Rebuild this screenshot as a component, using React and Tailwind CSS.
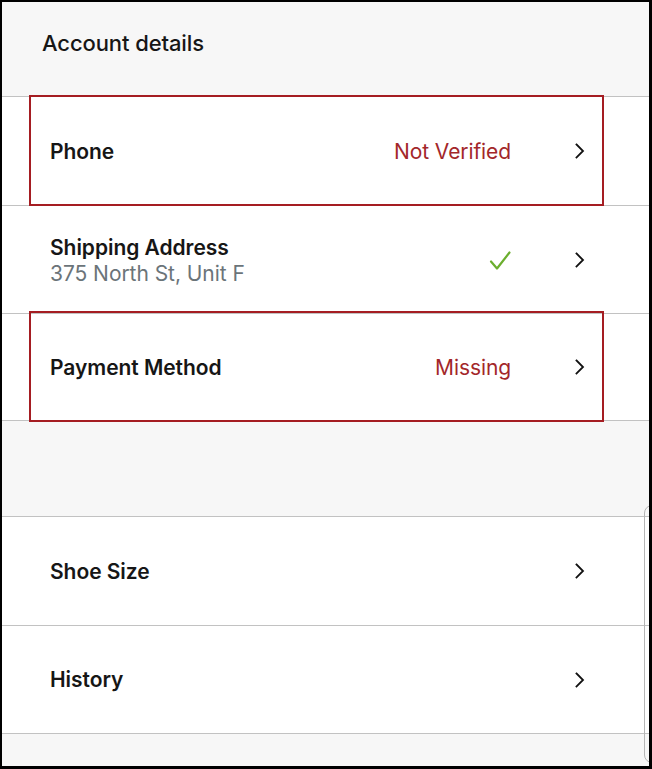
import React from "react";

function Chevron() {
  return (
    <svg width="12" height="16" viewBox="0 0 12 16" fill="none" className="shrink-0">
      <path d="M2.5 1.5 L9 8 L2.5 14.5" stroke="#111" strokeWidth="1.8" strokeLinecap="square" strokeLinejoin="miter" />
    </svg>
  );
}

function Check() {
  return (
    <svg width="24" height="20" viewBox="0 0 24 20" fill="none">
      <path d="M3 10.5 L9 17.5 L21.5 1.5" stroke="#6bae2e" strokeWidth="2.2" strokeLinecap="round" strokeLinejoin="round" />
    </svg>
  );
}

function Divider() {
  return <div className="h-px bg-[#c2c2c2] shrink-0" />;
}

function Row({ title, sub, status, check, h }) {
  return (
    <div className={`${h} bg-white flex items-center pl-[48px] pr-[63px] shrink-0`}>
      <div className={`flex-1 flex flex-col ${sub ? "mt-[3px]" : ""}`}>
        <span className="text-[21px] leading-[25px] font-semibold text-[#161616] tracking-[-0.05px]">{title}</span>
        {sub && <span className="text-[21px] leading-[28px] text-[#6b7479] tracking-[-0.05px]">{sub}</span>}
      </div>
      {status && <span className="text-[21px] leading-[25px] text-[#a3272a] mr-[63px] tracking-[-0.1px]">{status}</span>}
      {check && <div className="mr-[62px] mt-[2px]"><Check /></div>}
      <Chevron />
    </div>
  );
}

export default function App() {
  return (
    <div
      className="relative w-[652px] h-[769px] overflow-hidden bg-[#f7f7f7] border-black border-l-2 border-t-2 border-r-[3px] border-b-[3px] flex flex-col"
      style={{ fontFamily: "Inter, 'Liberation Sans', sans-serif" }}
    >
      <div className="h-[94px] shrink-0 pl-[40px] pt-[28px]">
        <span className="text-[22px] leading-[26px] font-medium text-[#161616] tracking-[-0.1px]">Account details</span>
      </div>
      <Divider />
      <Row title="Phone" status="Not Verified" h="h-[108px]" />
      <Divider />
      <Row title="Shipping Address" sub="375 North St, Unit F" check h="h-[107px]" />
      <Divider />
      <Row title="Payment Method" status="Missing" h="h-[106px]" />
      <Divider />
      <div className="h-[95px] shrink-0" />
      <Divider />
      <Row title="Shoe Size" h="h-[108px]" />
      <Divider />
      <Row title="History" h="h-[107px]" />
      <Divider />

      {/* annotation boxes */}
      <div className="absolute left-[27px] top-[93px] w-[575px] h-[111px] border-2 border-[#a51d22]" />
      <div className="absolute left-[27px] top-[309px] w-[575px] h-[111px] border-2 border-[#a51d22]" />

      {/* right edge bracket */}
      <div className="absolute left-[642px] top-[503px] w-[12px] h-[258px] border border-[#b5b5b5] rounded-l-[8px]" />
    </div>
  );
}
